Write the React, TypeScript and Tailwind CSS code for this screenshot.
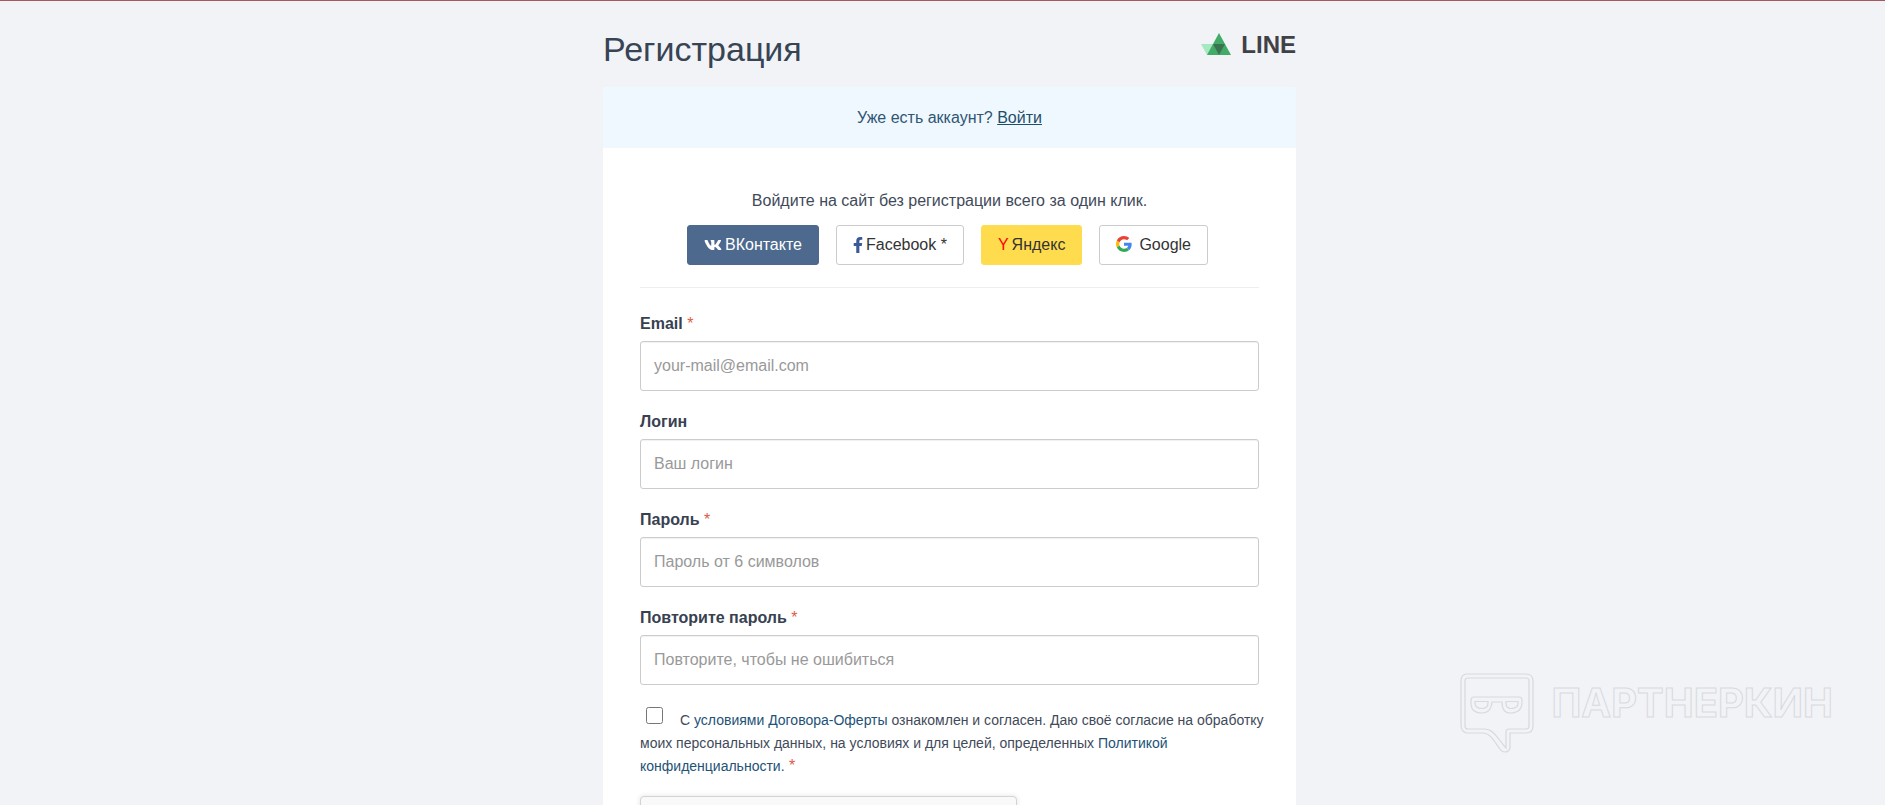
import React from "react";
import { FaFacebookF, FaVk } from "react-icons/fa";

function GoogleIcon() {
  return (
    <svg viewBox="0 0 48 48" className="mb-[2px] h-4 w-4" aria-hidden="true">
      <path fill="#EA4335" d="M24 9.5c3.54 0 6.71 1.22 9.21 3.6l6.85-6.85C35.9 2.38 30.47 0 24 0 14.62 0 6.51 5.38 2.56 13.22l7.98 6.19C12.43 13.72 17.74 9.5 24 9.5z" />
      <path fill="#4285F4" d="M46.98 24.55c0-1.57-.15-3.09-.38-4.55H24v9.02h12.94c-.58 2.96-2.26 5.48-4.78 7.18l7.73 6c4.51-4.18 7.09-10.36 7.09-17.65z" />
      <path fill="#FBBC05" d="M10.53 28.59c-.48-1.45-.76-2.99-.76-4.59s.27-3.14.76-4.59l-7.98-6.19C.92 16.46 0 20.12 0 24c0 3.88.92 7.54 2.56 10.78l7.97-6.19z" />
      <path fill="#34A853" d="M24 48c6.48 0 11.93-2.13 15.89-5.81l-7.73-6c-2.15 1.45-4.92 2.3-8.16 2.3-6.26 0-11.57-4.22-13.47-9.91l-7.98 6.19C6.51 42.62 14.62 48 24 48z" />
    </svg>
  );
}

function Logo() {
  return (
    <a href="#" className="mt-2 flex items-center gap-[10px] text-2xl leading-8 font-bold text-[#3f4147]">
      <svg viewBox="0 0 30 22" className="mb-[2px] h-[22px] w-[30px]" aria-hidden="true">
        <path d="M0 11H24L18 22H6Z" fill="#a6e8c0" />
        <path d="M18 0L30 22H6Z" fill="#43ab68" />
        <path d="M12 11H24L18 22Z" fill="#3b7351" />
      </svg>
      LINE
    </a>
  );
}

function Watermark() {
  return (
    <div className="pointer-events-none absolute right-[52px] bottom-[52px] flex w-[373px] justify-between">
      <svg viewBox="0 0 74 80" className="h-20 w-[74px]" fill="none" stroke="#d8dadd" strokeWidth="1.2" aria-hidden="true">
        <path d="M7 1H66Q73 1 73 8V53Q73 60 66 60H50V75Q49 79 45 79Q42 79 40 76C34 68 30 60 23 60H7Q1 59 1 52V8Q1 1 7 1Z" />
        <path d="M8 5H66Q69 5 69 8V53Q69 56 66 56H49Q46 56 46 59V75C37 65 34 56 24 56H8Q5 56 5 53V8Q5 5 8 5Z" />
        <path d="M14 24H59Q62 24 62 27V29Q62 40 50 40Q42 40 42 29H32Q31 40 22 40Q11 40 11 30V27Q11 24 14 24Z" />
        <path d="M15 28.500H28V30Q28 35.500 22 35.500Q15 35.500 15 30ZM46 28.500H58V30Q58 35.500 51 35.500Q46 35.500 46 30Z" />
      </svg>
      <span className="pt-[10px] font-[Inter,sans-serif] text-[40px] leading-[40px] font-bold text-[#f1f3f7] [-webkit-text-stroke:1px_#d8dadd]">
        ПАРТНЕРКИН
      </span>
    </div>
  );
}

const Required = () => <span className="font-normal text-[#e05a4a]"> *</span>;

const fields = [
  { id: "email", label: "Email", type: "email", placeholder: "your-mail@email.com", required: true },
  { id: "login", label: "Логин", type: "text", placeholder: "Ваш логин", required: false },
  { id: "password", label: "Пароль", type: "password", placeholder: "Пароль от 6 символов", required: true },
  { id: "repeat", label: "Повторите пароль", type: "password", placeholder: "Повторите, чтобы не ошибиться", required: true },
];

const social = "flex h-10 items-center rounded-[3px] border px-4";

export default function App() {
  return (
    <div className="relative h-screen overflow-hidden border-t border-[#a9565c] bg-[#f1f3f7] pl-[14px] font-['Liberation_Sans',Arial,sans-serif] text-base text-[#3f4a5a]">
      <main className="mx-auto max-w-[693px]">
        <header className="flex items-start justify-between pt-5 pb-[10px]">
          <h1 className="text-[34px] leading-[56px] text-[#374454]">Регистрация</h1>
          <Logo />
        </header>
        <section className="rounded-[3px] bg-white">
          <p className="rounded-t-[3px] bg-[#f0f8ff] py-[19px] text-center leading-[23px] text-[#2f5673]">
            Уже есть аккаунт?{" "}
            <a href="#" className="text-[#1d4e6b] underline">Войти</a>
          </p>
          <form className="px-[37px] pt-[41px]">
            <p className="text-center leading-6">Войдите на сайт без регистрации всего за один клик.</p>
            <div className="mt-3 flex justify-center gap-[17px] border-b border-[#eeeeee] pr-1 pb-[22px] text-[#333333]">
              <button type="button" className={`${social} gap-[3px] border-[#4d698e] bg-[#4d698e] text-white`}>
                <FaVk size={18} />
                ВКонтакте
              </button>
              <button type="button" className={`${social} gap-[3px] border-[#cccccc] bg-white`}>
                <FaFacebookF size={16} className="w-[10px] text-[#3b5998]" />
                Facebook *
              </button>
              <button type="button" className={`${social} gap-[3px] border-[#ffdc4d] bg-[#ffdc4d]`}>
                <span className="text-[#ff0000]">Y</span>
                Яндекс
              </button>
              <button type="button" className={`${social} gap-[7px] border-[#cccccc] bg-white`}>
                <GoogleIcon />
                Google
              </button>
            </div>
            <div className="mt-6">
              {fields.map((f) => (
                <div key={f.id} className="mb-[19px]">
                  <label htmlFor={f.id} className="block pb-[6px] leading-[23px] font-bold text-[#374151]">
                    {f.label}
                    {f.required && <Required />}
                  </label>
                  <input
                    id={f.id}
                    type={f.type}
                    placeholder={f.placeholder}
                    className="block h-[50px] w-full rounded-[3px] border border-[#cccccc] bg-white px-[13px] shadow-[inset_0_1px_1px_rgba(0,0,0,0.06)] placeholder:text-[#999999]"
                  />
                </div>
              ))}
            </div>
            <div className="-mr-4 pt-[3px] text-sm leading-[23px]">
              <input
                id="agree"
                type="checkbox"
                className="mr-[17px] ml-[6px] h-[17px] w-[17px] align-[1px]"
              />
              <label htmlFor="agree">
                С <a href="#" className="text-[#235277]">условиями Договора-Оферты</a> ознакомлен и согласен. Даю своё согласие на обработку моих персональных данных, на условиях и для целей, определенных{" "}
                <a href="#" className="text-[#235277]">Политикой конфиденциальности.</a>
                <span className="text-base leading-none"><Required /></span>
              </label>
            </div>
            <div className="mt-[18px] h-24 max-w-[377px] rounded-[4px] border border-[#d3d3d3] bg-[#f9f9f9] shadow-[0_0_4px_1px_rgba(0,0,0,0.08)]" />
          </form>
        </section>
      </main>
      <Watermark />
    </div>
  );
}
